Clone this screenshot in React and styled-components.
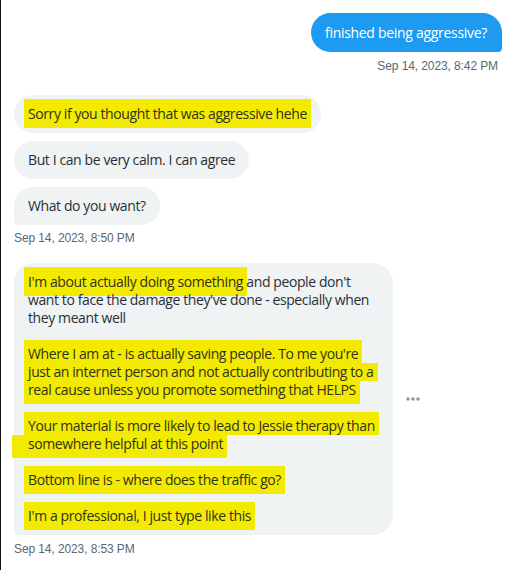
import React from "react";
import styled, { createGlobalStyle } from "styled-components";

const Global = createGlobalStyle`
  html, body { margin: 0; padding: 0; background: #ffffff; }
  body {
    width: 510px;
    height: 570px;
    overflow: hidden;
    font-family: "Open Sans", "Noto Sans", "Liberation Sans", sans-serif;
  }
`;

const Page = styled.div`
  box-sizing: border-box;
  width: 510px;
  height: 570px;
  border-left: 1px solid #111;
  padding: 13px 8px 0 13px;
  display: flex;
  flex-direction: column;
`;

const Group = styled.div`
  display: flex;
  flex-direction: column;
  align-items: ${(p) => (p.$sent ? "flex-end" : "flex-start")};
  gap: ${(p) => p.$gap || 0}px;
  margin-top: ${(p) => p.$top || 0}px;
`;

const SentBubble = styled.div`
  background: #1d9bf0;
  color: #ffffff;
  font-size: 14px;
  line-height: 19px;
  padding: 10px 15px 10px 14px;
  border-radius: 20px 20px 4px 20px;
  letter-spacing: -0.3px;
`;

const Bubble = styled.div`
  box-sizing: border-box;
  background: #eff3f4;
  color: #2a2f33;
  font-size: 14px;
  line-height: 18px;
  padding: 10px 14px 10px 14px;
  border-radius: ${(p) => (p.$last ? "20px 20px 20px 4px" : "20px")};
  width: ${(p) => (p.$width ? `${p.$width}px` : "auto")};
  letter-spacing: -0.4px;
  white-space: nowrap;
`;

const Para = styled.div`
  margin: 0;
  & + & {
    margin-top: 18px;
  }
`;

const Mark = styled.span`
  background: #f2ea00;
  color: #33321a;
  padding: 5px 4px;
  margin: 0 -4px;
`;

const HLine = styled.span`
  display: block;
  width: fit-content;
  background: #f2ea00;
  color: #33321a;
  padding: 0 4px 0 ${(p) => p.$left ?? 4}px;
  margin-left: -${(p) => p.$left ?? 4}px;
  box-shadow: ${(p) =>
    [p.$first && "0 -5px 0 #f2ea00", p.$end && "0 5px 0 #f2ea00"]
      .filter(Boolean)
      .join(", ") || "none"};
`;

const Stamp = styled.div`
  font-size: 12px;
  line-height: 16px;
  color: #5b6770;
  margin-top: ${(p) => p.$top || 5}px;
  padding-right: ${(p) => p.$right || 0}px;
  letter-spacing: -0.1px;
  font-family: "Liberation Sans", "Open Sans", sans-serif;
`;

const Row = styled.div`
  display: flex;
  align-items: center;
  gap: 12px;
`;

const More = styled.div`
  width: 16px;
  height: 16px;
  display: flex;
  align-items: center;
  justify-content: center;
  color: #8b98a5;
`;

const Dots = () => (
  <svg width="16" height="6" viewBox="0 0 16 6">
    <circle cx="3" cy="3" r="1.8" fill="currentColor" />
    <circle cx="8" cy="3" r="1.8" fill="currentColor" />
    <circle cx="13" cy="3" r="1.8" fill="currentColor" />
  </svg>
);

const Highlight = ({ lines, left }) => (
  <Para>
    {lines.map((l, i) => (
      <HLine
        key={i}
        $first={i === 0}
        $end={i === lines.length - 1}
        $left={left && left[i]}
      >
        {l}
      </HLine>
    ))}
  </Para>
);

export default function App() {
  return (
    <>
      <Global />
      <Page>
        <Group $sent>
          <SentBubble>finished being aggressive?</SentBubble>
          <Stamp $top={6} $right={4}>Sep 14, 2023, 8:42 PM</Stamp>
        </Group>

        <Group $gap={8} $top={21}>
          <Bubble>
            <Mark>Sorry if you thought that was aggressive hehe</Mark>
          </Bubble>
          <Bubble>But I can be very calm. I can agree</Bubble>
          <Bubble $last>What do you want?</Bubble>
        </Group>
        <Stamp $top={5}>Sep 14, 2023, 8:50 PM</Stamp>

        <Group $top={17}>
          <Row>
            <Bubble $last $width={379}>
              <Para>
                <Mark>I'm about actually doing something</Mark> and people don't
                <br />
                want to face the damage they've done - especially when
                <br />
                they meant well
              </Para>
              <Highlight
                lines={[
                  "Where I am at - is actually saving people. To me you're",
                  "just an internet person and not actually contributing to a",
                  "real cause unless you promote something that HELPS",
                ]}
              />
              <Highlight
                lines={[
                  "Your material is more likely to lead to Jessie therapy than",
                  "somewhere helpful at this point",
                ]}
                left={[4, 16]}
              />
              <Highlight lines={["Bottom line is - where does the traffic go?"]} />
              <Highlight lines={["I'm a professional, I just type like this"]} />
            </Bubble>
            <More>
              <Dots />
            </More>
          </Row>
        </Group>
        <Stamp $top={6}>Sep 14, 2023, 8:53 PM</Stamp>
      </Page>
    </>
  );
}
